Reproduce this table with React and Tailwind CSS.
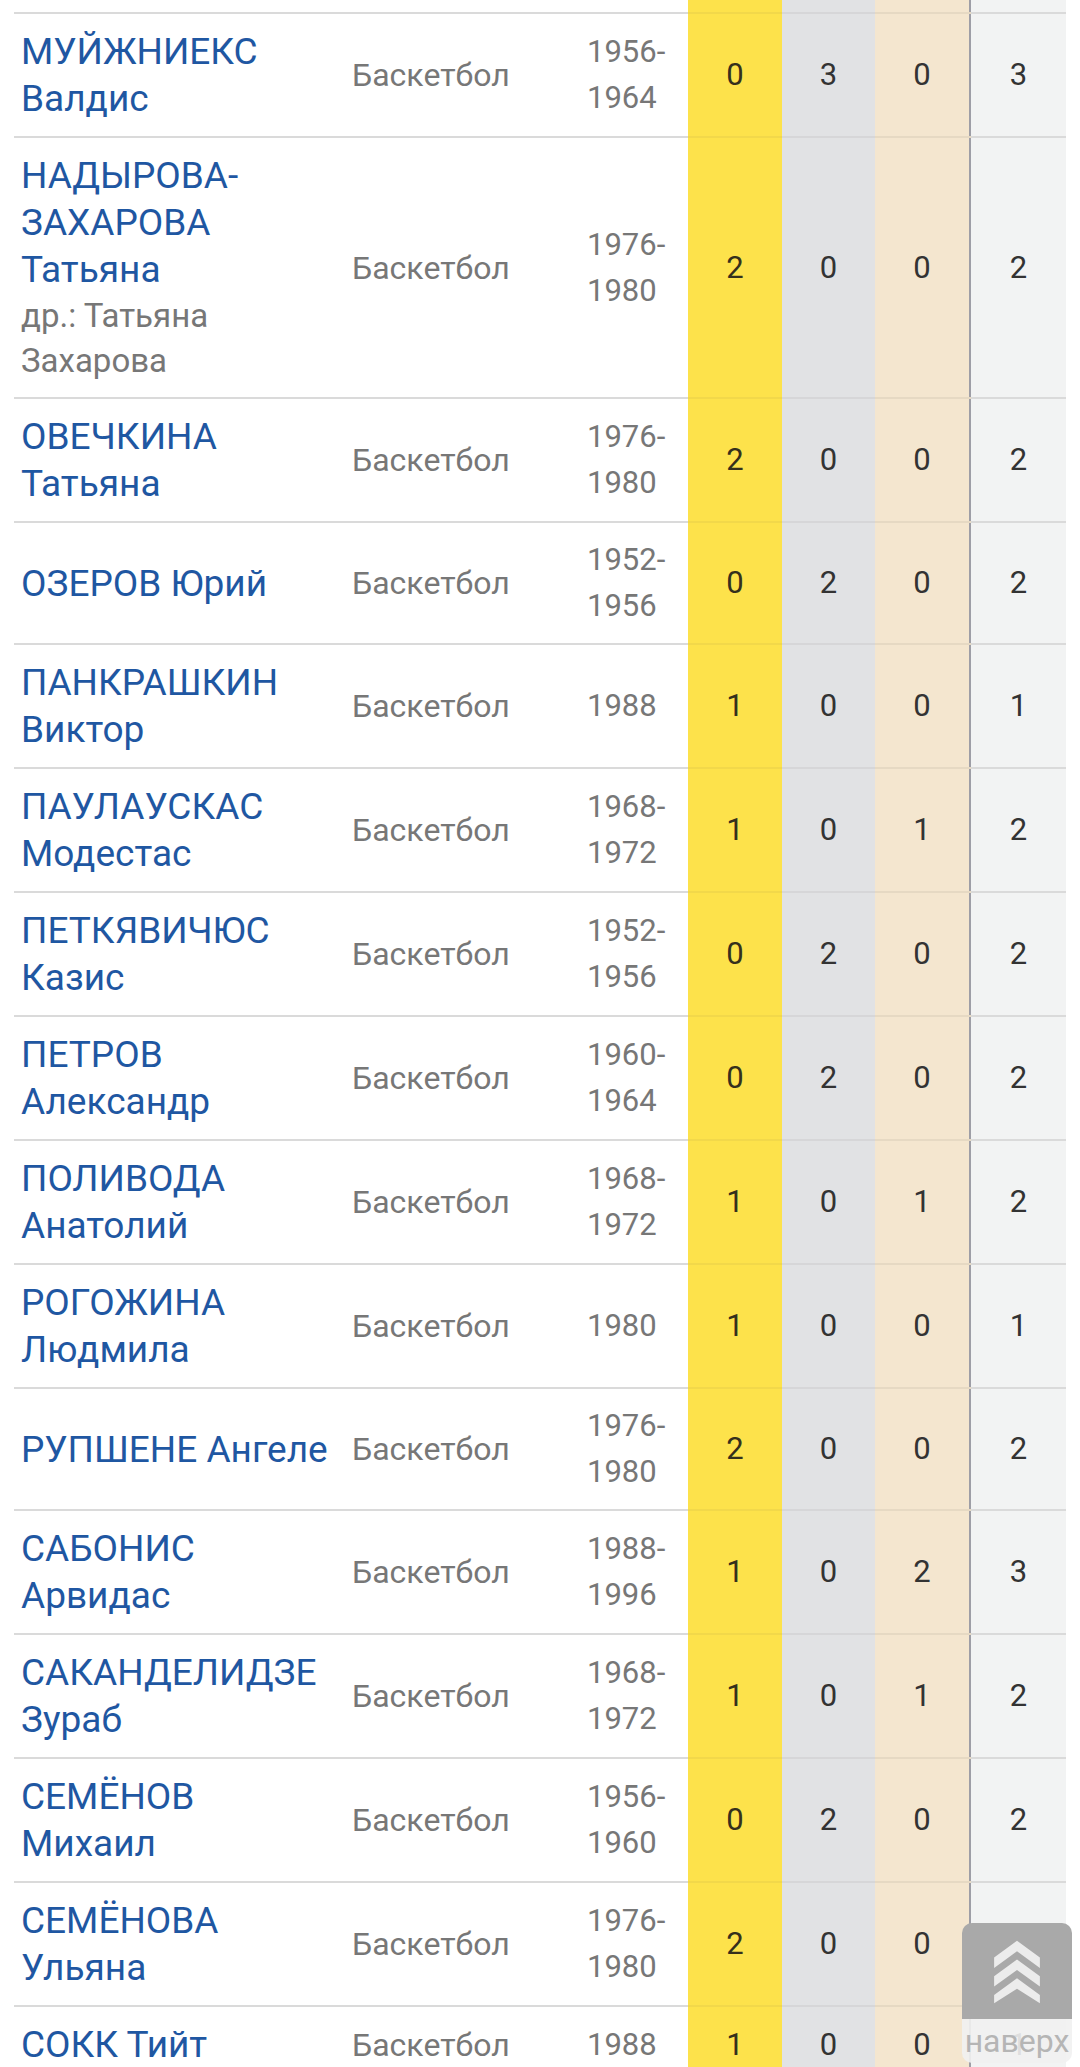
import React from "react";

const rows = [
  { name: ["МУЙЖНИЕКС", "Валдис"], years: ["1956-", "1964"], m: [0, 3, 0, 3] },
  {
    name: ["НАДЫРОВА-", "ЗАХАРОВА", "Татьяна"],
    alt: ["др.: Татьяна", "Захарова"],
    years: ["1976-", "1980"],
    m: [2, 0, 0, 2],
  },
  { name: ["ОВЕЧКИНА", "Татьяна"], years: ["1976-", "1980"], m: [2, 0, 0, 2] },
  { name: ["ОЗЕРОВ Юрий"], years: ["1952-", "1956"], m: [0, 2, 0, 2] },
  { name: ["ПАНКРАШКИН", "Виктор"], years: ["1988"], m: [1, 0, 0, 1] },
  { name: ["ПАУЛАУСКАС", "Модестас"], years: ["1968-", "1972"], m: [1, 0, 1, 2] },
  { name: ["ПЕТКЯВИЧЮС", "Казис"], years: ["1952-", "1956"], m: [0, 2, 0, 2] },
  { name: ["ПЕТРОВ", "Александр"], years: ["1960-", "1964"], m: [0, 2, 0, 2] },
  { name: ["ПОЛИВОДА", "Анатолий"], years: ["1968-", "1972"], m: [1, 0, 1, 2] },
  { name: ["РОГОЖИНА", "Людмила"], years: ["1980"], m: [1, 0, 0, 1] },
  { name: ["РУПШЕНЕ Ангеле"], years: ["1976-", "1980"], m: [2, 0, 0, 2] },
  { name: ["САБОНИС", "Арвидас"], years: ["1988-", "1996"], m: [1, 0, 2, 3] },
  { name: ["САКАНДЕЛИДЗЕ", "Зураб"], years: ["1968-", "1972"], m: [1, 0, 1, 2] },
  { name: ["СЕМЁНОВ", "Михаил"], years: ["1956-", "1960"], m: [0, 2, 0, 2] },
  { name: ["СЕМЁНОВА", "Ульяна"], years: ["1976-", "1980"], m: [2, 0, 0, 2] },
  { name: ["СОКК Тийт"], years: ["1988"], m: [1, 0, 0, 1] },
];

const cell = "border-b-2 border-[#dadada] align-middle py-[14px]";

const ToTop = () => (
  <div className="absolute right-[8px] bottom-[4px] w-[110px] rounded-[10px] overflow-hidden">
    <div className="h-[96px] bg-[#a9a9a9] flex items-center justify-center">
      <svg viewBox="0 0 50 62" className="w-[52px] h-[66px]" fill="#ececec">
        <path d="M25 2 L47 18 L47 28 L25 12 L3 28 L3 18 Z" />
        <path d="M25 20 L47 36 L47 46 L25 30 L3 46 L3 36 Z" />
        <path d="M25 38 L47 54 L47 62 L25 48 L3 62 L3 54 Z" />
      </svg>
    </div>
    <div className="h-[44px] bg-[#f1f1f1]/90 flex items-center justify-center text-[32px] leading-none text-[#b5b5b5]">
      наверх
    </div>
  </div>
);

const App = () => {
  return (
    <div
      className="relative h-[2067px] w-full overflow-hidden bg-white px-[14px]"
      style={{ fontFamily: "Roboto, 'Noto Sans', sans-serif" }}
    >
      <table className="w-[1052px] table-fixed border-collapse">
        <colgroup>
          <col className="w-[331px]" />
          <col className="w-[236px]" />
          <col className="w-[107px]" />
          <col className="w-[94px]" />
          <col className="w-[93px]" />
          <col className="w-[95px]" />
          <col className="w-[96px]" />
        </colgroup>
        <tbody>
          {/* tail of the previous row, cut off by the scroll */}
          <tr className="h-[13px]">
            <td className="border-b-2 border-[#dadada]" />
            <td className="border-b-2 border-[#dadada]" />
            <td className="border-b-2 border-[#dadada]" />
            <td className="border-b-2 border-[#f2d84a] bg-[#fde24b]" />
            <td className="border-b-2 border-[#d6d6d8] bg-[#e1e2e4]" />
            <td className="border-b-2 border-[#e6d9c3] bg-[#f4e6cf]" />
            <td className="border-b-2 border-l-2 border-b-[#dadada] border-l-[#9e9ea6] bg-[#f2f3f3]" />
          </tr>
          {rows.map((r, i) => (
            <tr key={i}>
              <td className={`${cell} pl-[7px] pr-[2px]`}>
                <div className="text-[37px] leading-[47px] text-[#1f57a2] whitespace-nowrap">
                  {r.name.map((l, j) => (
                    <div key={j}>{l}</div>
                  ))}
                </div>
                {r.alt && (
                  <div className="text-[33px] leading-[45px] text-[#777777] whitespace-nowrap">
                    {r.alt.map((l, j) => (
                      <div key={j}>{l}</div>
                    ))}
                  </div>
                )}
              </td>
              <td className={`${cell} pl-[7px] text-[32px] leading-[46px] text-[#777777]`}>
                Баскетбол
              </td>
              <td className={`${cell} pl-[6px] text-[31px] leading-[46px] text-[#777777]`}>
                {r.years.map((y, j) => (
                  <div key={j}>{y}</div>
                ))}
              </td>
              <td className="border-b-2 border-[#f2d84a] bg-[#fde24b] text-center align-middle text-[31px] leading-[46px] text-[#35301c]">
                {r.m[0]}
              </td>
              <td className="border-b-2 border-[#d6d6d8] bg-[#e1e2e4] text-center align-middle text-[31px] leading-[46px] text-[#333333]">
                {r.m[1]}
              </td>
              <td className="border-b-2 border-[#e6d9c3] bg-[#f4e6cf] text-center align-middle text-[31px] leading-[46px] text-[#333333]">
                {r.m[2]}
              </td>
              <td className="border-b-2 border-l-2 border-b-[#dadada] border-l-[#9e9ea6] bg-[#f2f3f3] text-center align-middle text-[31px] leading-[46px] text-[#333333]">
                {r.m[3]}
              </td>
            </tr>
          ))}
        </tbody>
      </table>
      <ToTop />
    </div>
  );
};

export default App;
